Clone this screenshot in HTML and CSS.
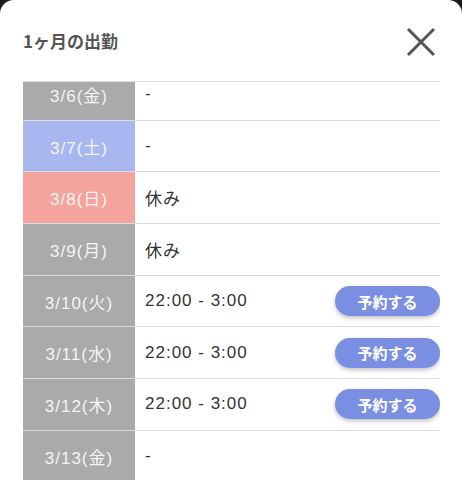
FILE: index.html
```html
<!doctype html>
<html lang="ja">
<head>
    <meta charset="UTF-8">
    <title>1ヶ月の出勤</title>
    <link rel="stylesheet" href="styles.css">
</head>
<body>
    <div class="sheet">
        <div class="sheet-head">
            <h2 class="sheet-title">1ヶ月の出勤</h2>
            <svg class="close" width="30" height="30" viewBox="0 0 30 30">
                <path d="M2 2 L28 28 M28 2 L2 28" stroke="#555" stroke-width="3" fill="none"/>
            </svg>
        </div>
        <div class="schedule">
            <div class="schedule-inner">
                <div class="row"><div class="day">3/6(金)</div><div class="time">-</div></div>
                <div class="row"><div class="day sat">3/7(土)</div><div class="time">-</div></div>
                <div class="row"><div class="day sun">3/8(日)</div><div class="time">休み</div></div>
                <div class="row"><div class="day">3/9(月)</div><div class="time">休み</div></div>
                <div class="row"><div class="day">3/10(火)</div><div class="time">22:00 - 3:00</div><a class="reserve">予約する</a></div>
                <div class="row"><div class="day">3/11(水)</div><div class="time">22:00 - 3:00</div><a class="reserve">予約する</a></div>
                <div class="row"><div class="day">3/12(木)</div><div class="time">22:00 - 3:00</div><a class="reserve">予約する</a></div>
                <div class="row"><div class="day">3/13(金)</div><div class="time">-</div></div>
                <div class="row"><div class="day sat">3/14(土)</div><div class="time">-</div></div>
            </div>
        </div>
    </div>
</body>
</html>
```

FILE: styles.css
```css
* { margin: 0; padding: 0; box-sizing: border-box; }
body {
    background: #1c1c1c;
    font-family: "Liberation Sans", "Noto Sans CJK JP", sans-serif;
}
.sheet {
    height: 480px;
    background: #fff;
    border-radius: 14px 14px 0 0;
    overflow: hidden;
}
.sheet-head {
    height: 81px;
    padding: 0 26px 0 23px;
    display: flex;
    align-items: center;
    justify-content: space-between;
}
.sheet-title {
    font-family: "Noto Sans CJK JP", sans-serif;
    font-size: 17px;
    font-weight: bold;
    color: #555;
    margin-top: -1px;
}
.close { display: block; margin-top: 2px; }
.schedule {
    margin: 0 22px 0 23px;
    border-top: 1px solid #dcdcdc;
    height: 399px;
    overflow: hidden;
}
.schedule-inner { margin-top: -13px; }
.row {
    height: 51.7px;
    display: flex;
    align-items: center;
    border-bottom: 1px solid #dcdcdc;
}
.day {
    width: 112px;
    height: 100%;
    flex-shrink: 0;
    background: #aaaaaa;
    color: #f4f4f4;
    font-size: 17px;
    letter-spacing: 1px;
    display: flex;
    align-items: center;
    justify-content: center;
}
.day.sat { background: #a9b7f1; }
.day.sun { background: #f4a49c; }
.time {
    flex: 1;
    padding-left: 10px;
    font-size: 17px;
    letter-spacing: 1px;
    color: #333;
}
.reserve {
    width: 105px;
    height: 30px;
    border-radius: 15px;
    background: #7a8fe2;
    color: #fff;
    font-family: "Noto Sans CJK JP", sans-serif;
    font-size: 15px;
    font-weight: bold;
    display: flex;
    align-items: center;
    justify-content: center;
    box-shadow: 0 2px 4px rgba(0, 0, 0, 0.25);
}
```
